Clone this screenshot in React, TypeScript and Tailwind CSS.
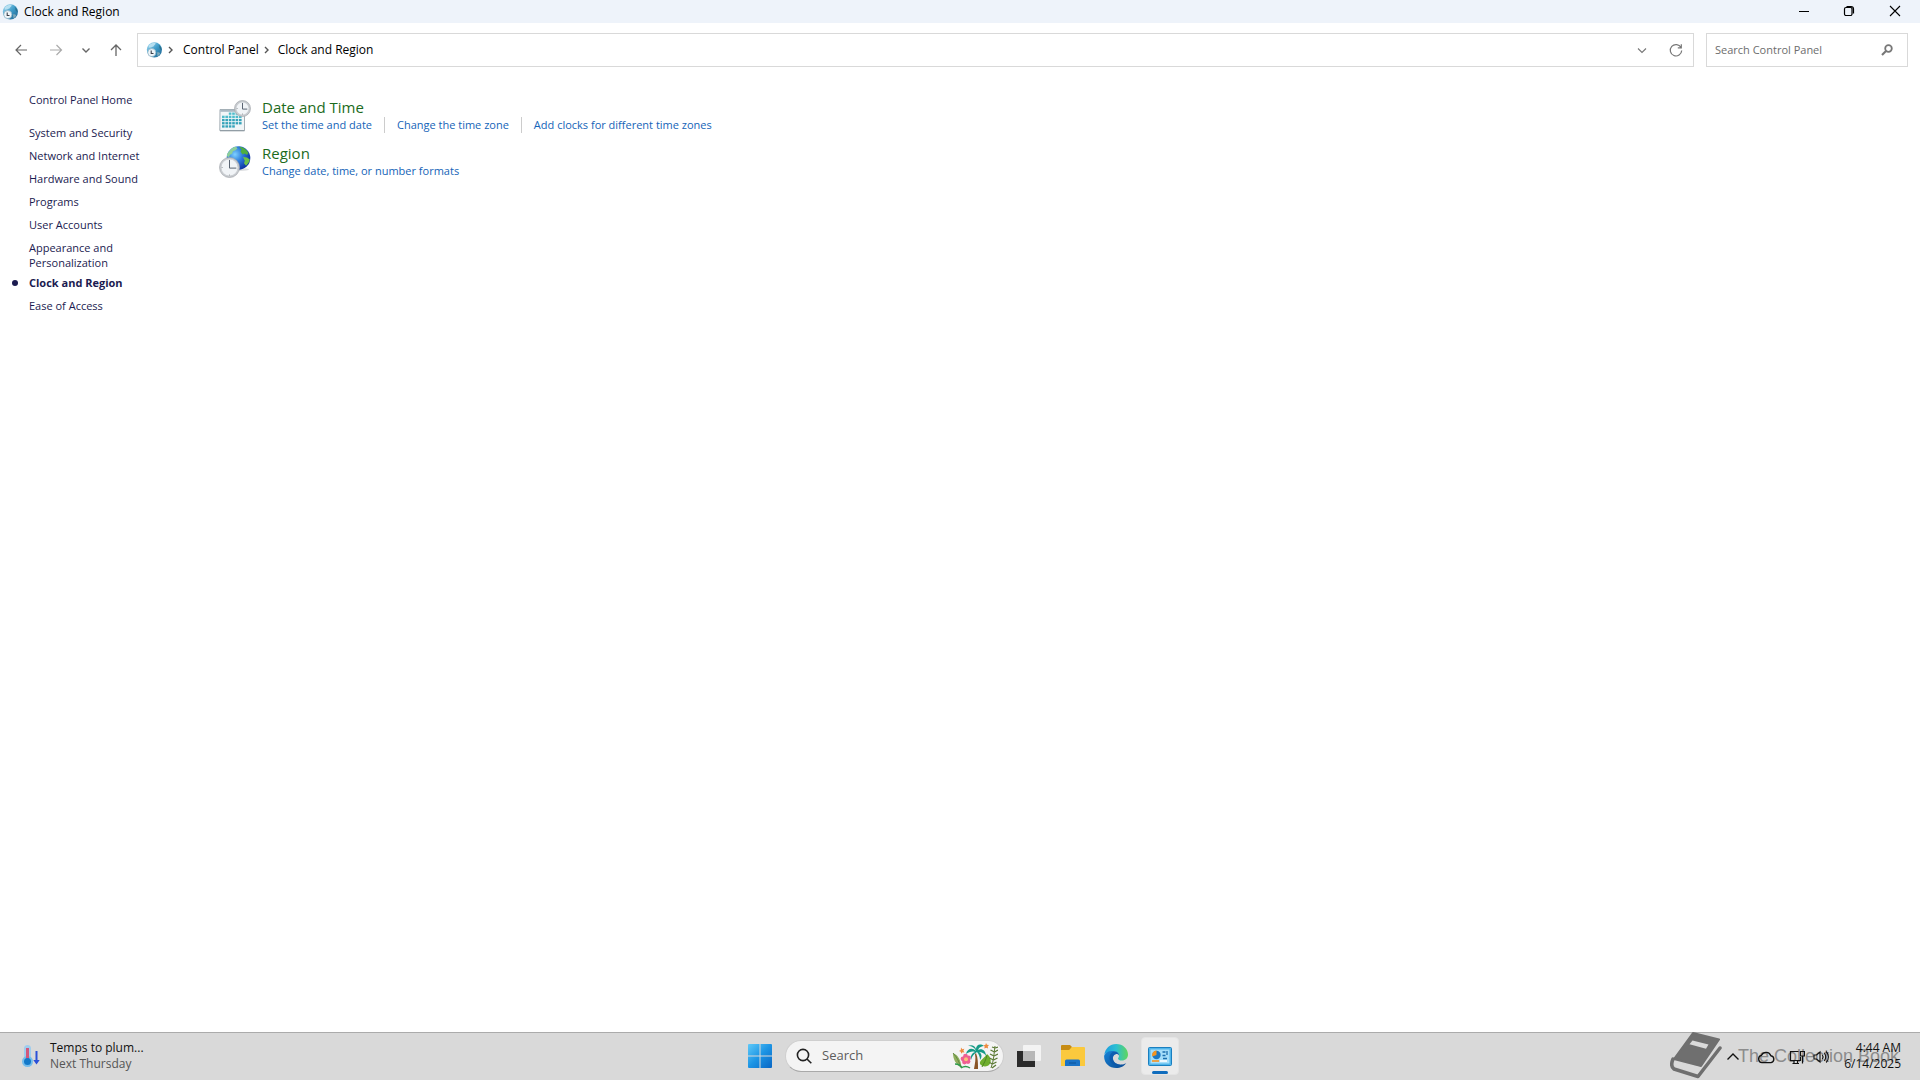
import React from "react";

type IconProps = { className?: string };

function GlobeClockSmall({ className }: IconProps) {
  return (
    <svg viewBox="0 0 16 16" className={className} aria-hidden="true">
      <defs>
        <linearGradient id="gs" x1="0" y1="0" x2="1" y2="1">
          <stop offset="0" stopColor="#a9dcf2" />
          <stop offset="0.5" stopColor="#3f9cc9" />
          <stop offset="1" stopColor="#1b5f8c" />
        </linearGradient>
      </defs>
      <circle cx="8.400" cy="7.800" r="7.600" fill="url(#gs)" />
      <path d="M3 3.500C5 1 8 .4 9.500 1 10 2.500 8 3 7.500 4.500 6 5 4.500 6 2.500 5.500Z" fill="#c8e8f5" opacity=".8" />
      <path d="M12.500 2.500c2 1.500 3 3.500 3 5.500-1.500-.5-2.500-2-2-3.200Z" fill="#2c6f8a" />
      <path d="M11 10.500c1.500-.5 2.500 0 3.200.7-.5 1.500-1.500 2.200-2.700 3Z" fill="#7fa9ba" />
      <circle cx="5.800" cy="10.600" r="4" fill="#eef5f9" stroke="#8fb0c2" strokeWidth=".7" />
      <path d="M5.200 8.500v3h2.300" fill="none" stroke="#3a3f4a" strokeWidth="1.100" />
    </svg>
  );
}

function ClockFace({ cx, cy, r }: { cx: number; cy: number; r: number }) {
  return (
    <g>
      <circle cx={cx} cy={cy} r={r} fill="#c9ccd0" stroke="#a3a8ad" strokeWidth=".7" />
      <circle cx={cx} cy={cy} r={r - 1.6} fill="#f1f4f7" stroke="#b7bcc1" strokeWidth=".4" />
      <path
        d={`M${cx} ${cy - r + 2.4}V${cy + 0.6}H${cx + r - 3.2}`}
        fill="none"
        stroke="#5a6472"
        strokeWidth="1"
      />
      <path
        d={`M${cx} ${cy + r - 3}v1.200M${cx - r + 2} ${cy}h1.200`}
        stroke="#8f9499"
        strokeWidth=".8"
      />
    </g>
  );
}

function DateTimeIcon({ className }: IconProps) {
  const cells: React.ReactNode[] = [];
  for (let r = 0; r < 5; r++) {
    for (let c = 0; c < 6; c++) {
      if ((r === 0 && c < 2) || (r === 4 && c > 3)) continue;
      cells.push(
        <rect key={`${r}-${c}`} x={3 + c * 3.4} y={12.5 + r * 3.2} width="2.600" height="2.300" fill={r < 2 ? "#4fbccb" : "#35a3ba"} />
      );
    }
  }
  return (
    <svg viewBox="0 0 32 32" className={className} aria-hidden="true">
      <path d="M1 9.500h24.500V30.500H.8Z" fill="#f1f6f8" stroke="#9aa5ad" strokeWidth=".9" />
      <path d="M1.300 9.800h24v2H1.300Z" fill="#aab9c3" />
      {cells}
      <path d="M1 30.800h24.500" stroke="#8b969e" strokeWidth="1" />
      <ClockFace cx={23.5} cy={8.5} r={8} />
    </svg>
  );
}

function RegionIcon({ className }: IconProps) {
  return (
    <svg viewBox="0 0 32 32" className={className} aria-hidden="true">
      <defs>
        <radialGradient id="rg" cx=".35" cy=".35" r=".7">
          <stop offset="0" stopColor="#7fd0ff" />
          <stop offset=".45" stopColor="#2f7fdc" />
          <stop offset="1" stopColor="#0b2fa0" />
        </radialGradient>
      </defs>
      <ellipse cx="21" cy="23.500" rx="9" ry="1.500" fill="#c5c8cc" opacity=".6" />
      <circle cx="19.500" cy="12" r="11.800" fill="url(#rg)" />
      <path d="M10 5.500C12.500 2 15 1 17 .8l1.500 1.500-2 2-2.500 1-1 2.500-2 1-1 2.500-2-1c-.6-1.500.8-3.500 2-4.800Z" fill="#8ccf9a" />
      <path d="M20 .6c4 .4 7.500 3 9.500 6.400l-1.500 2-2.500-1.500-2 1-2-3 1-2Z" fill="#4fae3f" />
      <path d="M24 11l4 .5 2.800 2c-.5 2.500-1.800 4.500-3.800 6.200l-2-2.500.8-2.500Z" fill="#6cc04a" />
      <ClockFace cx={10.5} cy={21.5} r={10} />
    </svg>
  );
}

function Stroke({ d, className, w = 1.2, box = 16 }: { d: string; className?: string; w?: number; box?: number }) {
  return (
    <svg viewBox={`0 0 ${box} ${box}`} className={className} fill="none" stroke="currentColor" strokeWidth={w} aria-hidden="true">
      <path d={d} />
    </svg>
  );
}

const CHEVRON_RIGHT = "M6 5l3 3-3 3";

function TitleBar() {
  return (
    <header className="flex h-[23px] items-center bg-[#eef3fa] pr-px pl-0.5 text-black">
      <GlobeClockSmall className="size-4" />
      <h1 className="ml-1.5 flex-1 text-[12px] leading-4">Clock and Region</h1>
      <button aria-label="Minimize" className="flex h-full w-[46px] items-center justify-center pb-0.5">
        <Stroke d="M3 8.500h10" w={1} className="size-4" />
      </button>
      <button aria-label="Restore" className="flex h-full w-11 items-center justify-center pb-0.5">
        <Stroke
          d="M3.500 6a1.500 1.500 0 0 1 1.500-1.500h4.500a1.500 1.500 0 0 1 1.500 1.500v5a1.500 1.500 0 0 1-1.500 1.500h-4.500a1.500 1.500 0 0 1-1.500-1.500zM5.500 3.500h4.500a2.500 2.500 0 0 1 2.500 2.500v4.500"
          className="size-4"
        />
      </button>
      <button aria-label="Close" className="flex h-full w-12 items-center justify-center pb-0.5">
        <Stroke d="M3 3l10 10M13 3L3 13" w={1.1} className="size-4" />
      </button>
    </header>
  );
}

function NavBar() {
  return (
    <div className="flex items-center pt-2.5 pr-3 pl-[13px]">
      <nav aria-label="History" className="flex w-[124px] items-center text-[#666]">
        <button aria-label="Back" className="mr-[19px]">
          <Stroke d="M14 8H3M8 3L3 8l5 5" className="size-4" />
        </button>
        <button aria-label="Forward" className="mr-3.5 text-[#aaa]">
          <Stroke d="M2 8h11M8.500 3l5 5-5 5" className="size-4" />
        </button>
        <button aria-label="Recent locations" className="mr-3.5">
          <Stroke d="M4.500 6.500L8 10l3.500-3.500" w={1.4} className="size-4" />
        </button>
        <button aria-label="Up">
          <Stroke d="M8 14V3M3 8l5-5 5 5" w={1.3} className="size-4" />
        </button>
      </nav>
      <div className="flex h-[34px] flex-1 items-center border border-[#d9d9d9] pl-2 text-[12px] text-black">
        <GlobeClockSmall className="size-4" />
        <Stroke d={CHEVRON_RIGHT} w={1.4} className="ml-px size-4 text-[#555]" />
        <a href="#control-panel" className="ml-1">Control Panel</a>
        <Stroke d={CHEVRON_RIGHT} w={1.4} className="size-4 text-[#555]" />
        <a href="#clock" className="ml-[3px]">Clock and Region</a>
        <span className="flex-1" />
        <button aria-label="Previous locations" className="mr-[18px] text-[#777]">
          <Stroke d="M4 6.500L8 10.500l4-4" w={1.1} className="size-4" />
        </button>
        <button aria-label="Refresh" className="mr-[9px] text-[#777]">
          <Stroke d="M13 5.500A5.700 5.700 0 1 0 13.700 8.500M13.300 2.300v3.500H9.800" w={1.2} className="size-4" />
        </button>
      </div>
      <label className="ml-3 flex h-[34px] w-[202px] items-center border border-[#d9d9d9] pr-3 pl-2">
        <input
          type="text"
          aria-label="Search Control Panel"
          placeholder="Search Control Panel"
          className="min-w-0 flex-1 text-[11px] text-[#666] outline-none placeholder:text-[#6d6d6d]"
        />
        <svg viewBox="0 0 16 16" className="size-4" fill="none" stroke="#777" aria-hidden="true">
          <circle cx="9.500" cy="6.500" r="3.300" strokeWidth="1.800" />
          <path d="M7 9l-4 4" strokeWidth="2.200" />
        </svg>
      </label>
    </div>
  );
}

function SideBar() {
  const item = "block leading-[15px]";
  return (
    <nav aria-label="Control Panel" className="w-[219px] shrink-0 pt-[25px] pl-[29px] text-[11px] text-[#1b1b50]">
      <a href="#home" className="block leading-[15px]">Control Panel Home</a>
      <ul className="mt-[18px] flex w-28 flex-col gap-2 whitespace-nowrap">
        <li><a href="#system" className={item}>System and Security</a></li>
        <li><a href="#network" className={item}>Network and Internet</a></li>
        <li><a href="#hardware" className={item}>Hardware and Sound</a></li>
        <li><a href="#programs" className={item}>Programs</a></li>
        <li><a href="#users" className={item}>User Accounts</a></li>
        <li><a href="#appearance" className={item}>Appearance and<br />Personalization</a></li>
        <li className="-mt-[3px] -ml-[17px] flex items-center">
          <span className="mr-[11px] size-1.5 rounded-full bg-[#1b1b50]" />
          <a href="#clock" aria-current="page" className="block leading-[15px] font-bold">Clock and Region</a>
        </li>
        <li><a href="#ease" className={item}>Ease of Access</a></li>
      </ul>
    </nav>
  );
}

function Category({ icon, title, links }: { icon: React.ReactNode; title: string; links: string[] }) {
  return (
    <section className="flex gap-[11px]">
      <div className="pt-[3px]">{icon}</div>
      <div>
        <h2 className="text-[15px] leading-5 text-[#1c6b1c]"><a href="#category">{title}</a></h2>
        <ul className="flex text-[11px] leading-4 text-[#1464b8]">
          {links.map((l, i) => (
            <li key={l} className={i ? "ml-3 border-l border-[#ccc] pl-3" : ""}>
              <a href="#task">{l}</a>
            </li>
          ))}
        </ul>
      </div>
    </section>
  );
}

function Weather() {
  return (
    <button className="flex items-center gap-2 pb-0.5 pl-5 text-left">
      <svg viewBox="0 0 22 24" className="h-6 w-[22px]" aria-hidden="true">
        <rect x="4" y="1" width="7" height="16" rx="3.500" fill="#9fcdee" />
        <circle cx="7.500" cy="17.500" r="5.500" fill="#74bdec" />
        <rect x="6" y="4" width="3" height="11" fill="#d2577b" />
        <circle cx="7.500" cy="17.500" r="3.500" fill="#1379c9" />
        <path d="M15.500 7h2v9h2.200l-3.200 4.500-3.200-4.500h2.200Z" fill="#2b50d8" />
      </svg>
      <span className="text-[12px] leading-4 text-[#111]">
        <span className="block">Temps to plum...</span>
        <span className="block text-[#555]">Next Thursday</span>
      </span>
    </button>
  );
}

function PalmArt() {
  return (
    <svg viewBox="0 0 46 27" className="h-[27px] w-[46px]" aria-hidden="true">
      <path d="M1 10c5 2 8 7 8.500 15C4 21 1 17 1 10Z" fill="#8fae5d" />
      <path d="M1 10c4 4 6 9 8.500 15" stroke="#55803a" strokeWidth=".8" fill="none" />
      <path d="M9 25c3-2 6-2 9 0M3 21c4 0 6 2 7 4" stroke="#2f9a4a" strokeWidth="1.500" fill="none" />
      <path d="M24 10c2 5 2 10 2 16h-4c1-6 2-10 1-15Z" fill="#8a5425" />
      <path d="M24 8C20 4 15 6 14 11c3-2 6-3 9-2-3 1-5 4-4 8 1-4 3-6 6-8 2 2 3 5 3 8 3-4 1-7-1-8 3 0 5 1 7 4 0-5-4-8-8-6 1-3 4-4 6-4-4-3-8-1-8 3-1-3-4-5-8-3 4 0 7 2 8 5Z" fill="#159a86" />
      <path d="M9 4.500l1.300 1.700 2-.4-.9 2 1.100 1.700-2-.3L9.200 10.700 8.800 8.700 7 7.900l1.800-1Z" fill="#ee8a3e" />
      <path d="M34 0l1 1.800 2 .3-1.300 1.500.4 2-1.900-.8-1.900.8.4-2L31.300 2.200l2-.3Z" fill="#ee8a3e" />
      <g fill="#ef5f92">
        <circle cx="13.500" cy="13.200" r="2.400" /><circle cx="16.500" cy="15" r="2.400" /><circle cx="16" cy="18.500" r="2.400" />
        <circle cx="12.500" cy="19" r="2.400" /><circle cx="11" cy="15.800" r="2.400" />
      </g>
      <circle cx="14" cy="16.200" r="2" fill="#f8c07a" />
      <path d="M35 11c4 3 5 8 2 11-2 2-7 2-9-1-1-4 4-5 7-10Z" fill="#6fae2e" />
      <path d="M35 12c-1 5-3 8-5 12" stroke="#4b8422" fill="none" />
      <path d="M43 3c-1 7-1 14-4 22" stroke="#5c7a35" fill="none" />
      <path d="M43 5l-3-1M43 5l3-1M42.500 9l-4-2M42.500 9l3.500-2M42 13l-4-2M42 13l4-2M41.500 17l-4-2M41.500 17l4-2M40.500 21l-3-1.500M40.500 21l4-2M40 25l4-3" stroke="#5c7a35" strokeWidth="1.300" />
    </svg>
  );
}

function TaskbarCenter() {
  return (
    <div className="flex items-center pb-px pl-[7px]">
      <button aria-label="Start" className="mr-[13px]">
        <svg viewBox="0 0 24 24" className="size-6" aria-hidden="true">
          <defs>
            <linearGradient id="win" gradientUnits="userSpaceOnUse" x1="0" y1="0" x2="24" y2="24">
              <stop offset="0" stopColor="#5fc9f8" />
              <stop offset=".5" stopColor="#1c94e4" />
              <stop offset="1" stopColor="#0a66c4" />
            </linearGradient>
          </defs>
          <path d="M1 0h10.500v11.500H0V1Q0 0 1 0ZM12.500 0H23q1 0 1 1v10.500H12.500ZM0 12.500h11.500V24H1q-1 0-1-1ZM12.500 12.500H24V23q0 1-1 1H12.500Z" fill="url(#win)" />
        </svg>
      </button>
      <label className="flex h-8 w-[219px] items-center rounded-full border border-[#cfcfcf] border-b-[#a9a9a9] bg-[#f4f4f4] pr-[5px] pl-2.5">
        <svg viewBox="0 0 16 16" className="size-4" fill="none" stroke="#222" strokeWidth="1.600" aria-hidden="true">
          <circle cx="7" cy="7" r="5.600" />
          <path d="M11 11l4.300 4.300" />
        </svg>
        <input type="text" aria-label="Search" placeholder="Search" className="ml-2.5 min-w-0 flex-1 text-[13px] outline-none placeholder:text-[#5c5c5c]" />
        <PalmArt />
      </label>
      <button aria-label="Task view" className="ml-3">
        <svg viewBox="0 0 26 24" className="h-6 w-[26px]" aria-hidden="true">
          <rect x="1" y="7" width="18" height="16" fill="#2b2b2b" />
          <rect x="7" y="1" width="18" height="16" rx="1" fill="#f3f3f3" />
          <path d="M7 7h12v10H8q-1 0-1-1Z" fill="#b8b8b8" />
        </svg>
      </button>
      <button aria-label="File Explorer" className="ml-[18px]">
        <svg viewBox="0 0 26 24" className="h-6 w-[26px]" aria-hidden="true">
          <path d="M1 2q0-1 1-1h8l2 2-2 4H1Z" fill="#c78c14" />
          <path d="M1 6h8l3-3h12q1 0 1 1v18H1Z" fill="#fbc93d" />
          <path d="M5 22v-5q0-1.500 1.500-1.500h12q1.500 0 1.500 1.500v5Z" fill="#1a73c7" />
          <path d="M9 19h7" stroke="#0d5599" />
        </svg>
      </button>
      <button aria-label="Microsoft Edge" className="ml-[18px]">
        <svg viewBox="0 0 24 24" className="size-6" aria-hidden="true">
          <defs>
            <linearGradient id="e1" x1="0" y1=".3" x2="1" y2=".3">
              <stop offset="0" stopColor="#1e9be0" />
              <stop offset=".5" stopColor="#2bbfd2" />
              <stop offset="1" stopColor="#5fd65c" />
            </linearGradient>
            <linearGradient id="e2" x1="0" y1="0" x2="1" y2="1">
              <stop offset="0" stopColor="#1583d8" />
              <stop offset="1" stopColor="#0c4a92" />
            </linearGradient>
          </defs>
          <path d="M.3 11C1 4.500 6 0 12.200 0 19 0 24 5 24 10.500c0 3.700-2.700 6-6 6-2.500 0-4-1-4-1.800 0-.8 1-1.200 1-3.200 0-2.200-2.200-4-5.500-4C5 7.500 1.500 9 .3 11Z" fill="url(#e1)" />
          <path d="M.2 11.500C1.500 8.500 5 6.500 9 7c3.500.3 6 2.200 6 4.500-.8-1.200-2.200-1.700-3.500-1.200C9.500 11 8.500 13 9 15.200c.8 3.800 5 6 9.500 5.300 1.700-.3 3-1 3.800-1.500C20.500 22 16.500 24 12.200 24 5 24-.5 18.500.2 11.500Z" fill="url(#e2)" />
          <path d="M5.500 14c0-4 2.500-6.500 5.500-6.500 2.500 0 4 2 4 4-.8-1.200-2.200-1.700-3.500-1.200C9.500 11 8.500 13 9 15.200c.8 3.800 5 6 9.500 5.300-6 3-13-.5-13-6.500Z" fill="#0c56a8" opacity=".7" />
        </svg>
      </button>
      <button aria-label="Control Panel" aria-current="true" className="relative ml-[13px] flex h-[38px] w-[38px] items-center justify-center rounded border border-[#e4e4e4] bg-[#ebebeb]">
        <svg viewBox="0 0 24 19" className="h-[19px] w-6" aria-hidden="true">
          <rect x=".5" y=".5" width="23" height="18" rx="1" fill="#4fb5ea" stroke="#1a7fc0" />
          <rect x="2.500" y="2.500" width="19" height="14" fill="#a5defa" />
          <circle cx="8.500" cy="8" r="4.200" fill="#1b78c4" />
          <path d="M8.500 8V3.500A4.500 4.500 0 0 0 4.300 9.500Z" fill="#f6941e" />
          <path d="M14.500 5h3M14.500 8.500h3M19 4v4M15 11.500h4" stroke="#1b6fae" strokeWidth="1.300" />
          <path d="M4 14h7" stroke="#f6941e" strokeWidth="1.600" />
          <path d="M12 14h7" stroke="#fff" strokeWidth="1.600" />
        </svg>
        <span className="absolute bottom-0 h-[3px] w-4 rounded-full bg-[#0f6cbd]" />
      </button>
    </div>
  );
}

function Tray() {
  return (
    <div className="relative flex h-full items-center justify-end pr-[19px] text-[#111]">
      <div className="absolute right-[21px] flex items-center pb-px text-[#777]">
        <svg viewBox="0 0 52 48" className="mr-4 h-12 w-[52px]" aria-hidden="true">
          <path d="M23 1L49 7.500 31 34 4 27Z" fill="#6f6f6f" stroke="#6f6f6f" strokeWidth="2" strokeLinejoin="round" />
          <path d="M22.500 8.500l16 4-2.500 4.300-16.500-4.500Z" fill="#dadada" />
          <path d="M3 27Q0 34 4 37l24 7.500L50 16" fill="none" stroke="#6f6f6f" strokeWidth="3.500" strokeLinejoin="round" strokeLinecap="round" />
          <path d="M5 29.500q-1 3 1 5l22 6.500 3-5.500Z" fill="#dadada" />
        </svg>
        <span className="font-['Liberation_Sans'] text-[18px] whitespace-nowrap text-[#8c8c8c]">The Collection Book</span>
      </div>
      <button aria-label="Show hidden icons" className="relative mr-4">
        <Stroke d="M2.500 10.500L8 5l5.500 5.500" w={1.4} className="size-4" />
      </button>
      <button aria-label="OneDrive" className="relative mr-3.5">
        <Stroke d="M4.500 13A3.300 3.300 0 0 1 4 6.500a4.500 4.500 0 0 1 8.300.4A3.100 3.100 0 0 1 12.500 13Z" w={1.2} className="size-[18px]" />
      </button>
      <button aria-label="Network" className="relative mr-2">
        <Stroke d="M9.500 2.500h-8v9h10V8M5 11.500v3M8.500 11.500v3M3.500 14.500h6.500M11.500 2.500h4v4.500h-4zM13.500 7v7.500" w={1.2} className="size-4" />
      </button>
      <button aria-label="Volume" className="relative mr-3">
        <Stroke d="M1 6v4h2.500L7 13V3L3.500 6zM9.200 6a3 3 0 0 1 0 4M11.200 4.200a5.500 5.500 0 0 1 0 7.600M13.200 2.500a8 8 0 0 1 0 11" w={1.1} className="size-4" />
      </button>
      <button className="relative w-[60px] pb-0.5 text-right text-[12px] leading-4 whitespace-nowrap">
        <span className="block">4:44 AM</span>
        <span className="block">6/14/2025</span>
      </button>
    </div>
  );
}

export default function App() {
  return (
    <div className="flex min-h-screen flex-col bg-white font-['Open_Sans','Noto_Sans',sans-serif]">
      <TitleBar />
      <NavBar />
      <div className="flex flex-1">
        <SideBar />
        <main className="flex flex-1 flex-col gap-2.5 pt-[30px]">
          <Category
            icon={<DateTimeIcon className="size-8" />}
            title="Date and Time"
            links={["Set the time and date", "Change the time zone", "Add clocks for different time zones"]}
          />
          <Category icon={<RegionIcon className="size-8" />} title="Region" links={["Change date, time, or number formats"]} />
        </main>
      </div>
      <footer className="grid h-12 grid-cols-[1fr_auto_1fr] items-stretch border-t border-[#ababab] bg-[#d9d9d9]">
        <Weather />
        <TaskbarCenter />
        <Tray />
      </footer>
    </div>
  );
}
